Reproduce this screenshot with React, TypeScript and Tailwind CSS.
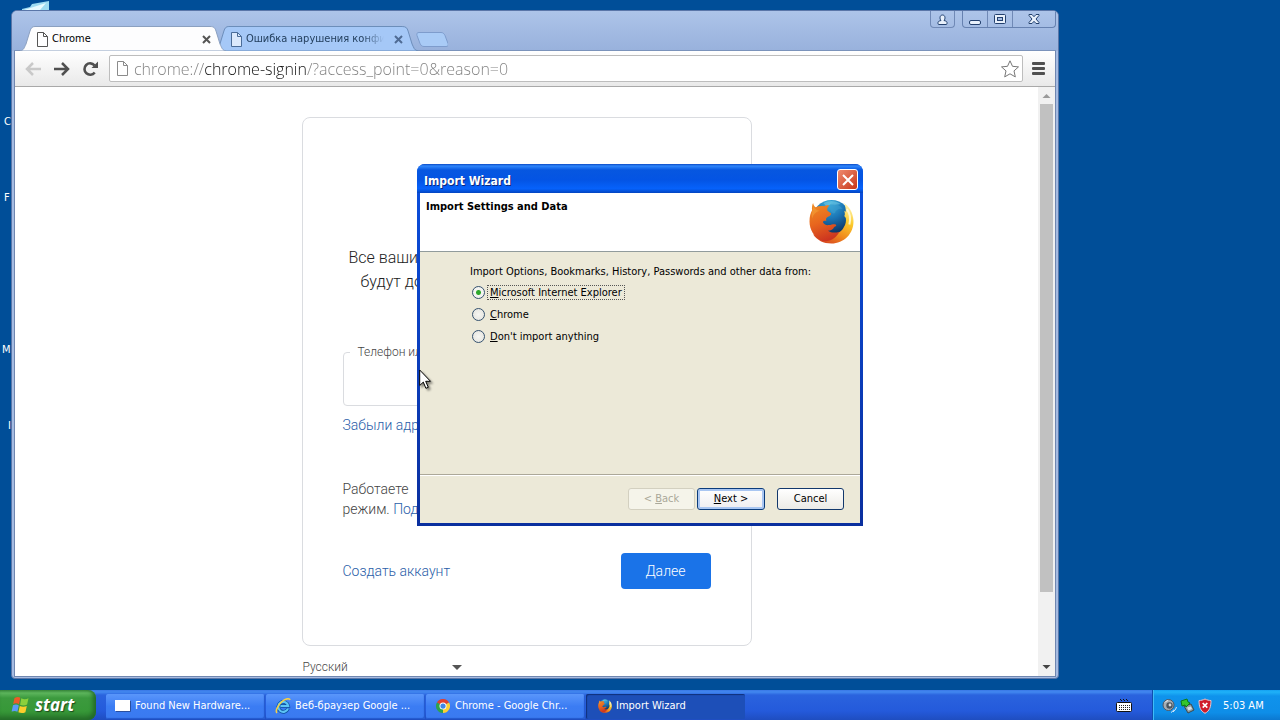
import type { ReactNode } from "react";

function PageIcon({ className = "" }: { className?: string }) {
  return (
    <svg width="12" height="15" viewBox="0 0 12 15" className={`shrink-0 ${className}`} fill="none" stroke="currentColor" aria-hidden="true">
      <path d="M1.500 .5h6l4 4v10h-10z" fill="#fff" fillOpacity=".6" />
      <path d="M7.500 .5v4h4" />
    </svg>
  );
}

function CloseMark({ className = "" }: { className?: string }) {
  return (
    <svg width="9" height="9" viewBox="0 0 9 9" className={className} stroke="currentColor" strokeWidth="2" aria-hidden="true">
      <path d="M1 1l7 7M8 1L1 8" />
    </svg>
  );
}

function FirefoxLogo({ size }: { size: number }) {
  return (
    <svg width={size} height={size} viewBox="0 0 44 44" className="shrink-0" aria-hidden="true">
      <defs>
        <radialGradient id={`globe${size}`} cx="45%" cy="10%" r="85%">
          <stop offset="0" stopColor="#3ab0dc" />
          <stop offset=".45" stopColor="#1a74b4" />
          <stop offset="1" stopColor="#0b2450" />
        </radialGradient>
        <linearGradient id={`fox${size}`} x1=".2" y1="0" x2=".5" y2="1">
          <stop offset="0" stopColor="#ee8a24" />
          <stop offset=".5" stopColor="#e8661e" />
          <stop offset="1" stopColor="#cc3420" />
        </linearGradient>
        <linearGradient id={`tail${size}`} x1=".8" y1="0" x2=".3" y2="1">
          <stop offset="0" stopColor="#fff5b8" />
          <stop offset=".35" stopColor="#fbcb2c" />
          <stop offset=".7" stopColor="#f08a1e" />
          <stop offset="1" stopColor="#d8461f" />
        </linearGradient>
      </defs>
      <circle cx="22" cy="20" r="19" fill={`url(#globe${size})`} />
      <path d="M14 4c5-3 12-3 17 1-2 0-4 1-6 1-3-1-6 0-8 1z" fill="#7fcfe8" opacity=".5" />
      <path d="M21 5c5-1 9 1 12 5-3-1-5 0-7 2 0 2-2 3-4 1-1-3-4-5-1-8z" fill="#3f9fd0" opacity=".5" />
      <path
        d="M34 4c5 3 9 9 9.500 17C44 34 34 43.500 22 43.500c-8 0-14-3-18-9 7 2 13 2 19 0 6-1 9-3 11-7 2-3 2.500-6 2-9l-1.500-2c1-1 .5-3 0-5l1.500 1c0-3-.5-6-2-8.500z"
        fill={`url(#tail${size})`}
      />
      <path
        d="M4 4c.5 2 1 3.500 2.500 4C9 6.800 12 6.500 15 7c1.500-1 3-1 5-.5-2 1-2.500 3-2 5l3.500 2.500c.5 2-2 3-4 4-1 1-1 2-.5 3.500-1.500-.5-3 0-3.500 1 1 2 3 3.500 6 3 3-.5 5-1.500 6.500-.5 1.500.8 0 2-1.500 2.500-1 2-3 3.500-6 3.500 3 2 7 2.500 11 1C28 37 20 43 13 41 5 37.500.5 30 .5 22c0-5 1-8 2.500-11-.3-2.500 0-5 1-7z"
        fill={`url(#fox${size})`}
      />
      <path d="M4.500 7c1 2.500 3 4 6 4.500C7 12.500 4 15 3 19c-.8-4 0-8 1.500-12z" fill="#f6a63c" opacity=".5" />
      <path d="M37 10c3 4 4 9 2.500 15" fill="none" stroke="#fffbe0" strokeWidth="2" opacity=".85" />
    </svg>
  );
}

function ExplorerLogo() {
  return (
    <svg width="16" height="16" viewBox="0 0 16 16" className="shrink-0" fill="none" aria-hidden="true">
      <path d="M13 10.500A5 5 0 1 1 13.200 8H5.500" stroke="#0b4f9c" strokeWidth="3.600" />
      <path d="M13 10.500A5 5 0 1 1 13.200 8H5.500" stroke="#5cc4f6" strokeWidth="2.200" />
      <path d="M2 15c-2-2 1-8 5-11.500C10.500.5 14.500 0 15 2" stroke="#f4cf4a" strokeWidth="1.600" />
    </svg>
  );
}

function ChromeLogo() {
  return (
    <svg width="14" height="14" viewBox="0 0 24 24" className="shrink-0" aria-hidden="true">
      <path d="M12 12L1.600 6A12 12 0 0 1 22.400 6z" fill="#e2402e" />
      <path d="M12 12L22.400 6A12 12 0 0 1 12 24z" fill="#fbcf35" />
      <path d="M12 12l0 12A12 12 0 0 1 1.600 6z" fill="#2fa24c" />
      <circle cx="12" cy="12" r="6" fill="#fff" />
      <circle cx="12" cy="12" r="4.500" fill="#3f86e8" />
    </svg>
  );
}

function WindowsFlag() {
  return (
    <svg width="19" height="18" viewBox="0 0 19 18" className="shrink-0" aria-hidden="true">
      <path d="M3.500 2C6 .6 7.800.8 9.300 1.800L8 8.200C6.300 7.200 4.500 7 2.200 8z" fill="#ee5a28" />
      <path d="M10.300 2.300c2.300 1.200 4.700 1.200 7.200 0l-1.400 6.300c-2.400 1.200-4.800 1.200-7 .1z" fill="#8bd03c" />
      <path d="M2 9.200c2.300-1 4.200-.8 5.800.2L6.400 15.800C4.700 14.800 3 14.600.6 15.600z" fill="#5b9bf5" />
      <path d="M8.800 9.900c2.200 1.100 4.600 1.100 7 0l-1.400 6.300c-2.400 1.200-4.700 1.200-7 .1z" fill="#fbcd2c" />
    </svg>
  );
}

function Tab({ active, width, title, textClass }: { active: boolean; width: string; title: string; textClass: string }) {
  return (
    <div className={`relative flex h-[25px] items-center ${width} ${active ? "z-10 text-black" : "-ml-3 text-[#24405f]"}`}>
      <svg viewBox="0 0 206 25" preserveAspectRatio="none" className="absolute inset-0 h-full w-full" aria-hidden="true">
        <path
          d="M0 25C4 24 4 22 6 18L10 5C11 2 12 .5 15 .5H190C194 .5 195 2 196 5L200 18C202 22 202 24 206 25z"
          fill={active ? "#fdfdfe" : "#a5c8f7"}
          stroke={active ? "#8ba0c0" : "#6c8db9"}
        />
      </svg>
      <button type="button" className="relative flex min-w-0 flex-1 items-center gap-1 pt-px pl-4 text-left">
        <PageIcon className={active ? "text-[#555]" : "text-[#4a6c98]"} />
        <span className={`overflow-hidden whitespace-nowrap ${textClass}`}>{title}</span>
      </button>
      <button type="button" aria-label="Close tab" className="relative mr-[15px] shrink-0 pt-px">
        <CloseMark className={active ? "text-[#555]" : "text-[#4f6b94]"} />
      </button>
    </div>
  );
}

function ChromeTitleBar() {
  return (
    <header className="flex h-10 items-start justify-between bg-linear-to-b from-[#adc4e9] to-[#98b1dc] pl-2">
      <div className="flex items-end self-end">
        <Tab active width="w-[206px]" title="Chrome" textClass="" />
        <Tab
          active={false}
          width="w-[204px]"
          title="Ошибка нарушения конфигурации"
          textClass="w-[138px] [mask-image:linear-gradient(to_right,black_85%,transparent)]"
        />
        <button type="button" aria-label="New tab" className="-ml-[2px] mb-1">
          <svg width="32" height="15" viewBox="0 0 32 15" aria-hidden="true">
            <path d="M3 .5h22c2 0 3 1 4 3l3 8c.6 2 0 3-2 3H8c-2 0-3-1-4-3L1 3.500C.5 1.500 1 .5 3 .5z" fill="#a9cbf6" stroke="#7e9ccc" />
          </svg>
        </button>
      </div>
      <div className="flex items-start gap-[7px] pr-[2px] text-[#23406e]">
        <button type="button" aria-label="Profile" className="flex h-[17px] w-[25px] items-center justify-center rounded-b border border-t-0 border-[#7089b6]">
          <svg width="11" height="11" viewBox="0 0 11 11" fill="#e8f0fb" stroke="currentColor" aria-hidden="true">
            <path d="M1 9.500V8.500c0-1 1-1.500 3-2C2.500 5 2.500 1 5.500 1s3 4 1.500 5.500c2 .5 3 1 3 2v1q0 1-1 1H2q-1 0-1-1z" />
          </svg>
        </button>
        <div className="flex h-[17px] divide-x divide-[#7089b6] overflow-hidden rounded-b border border-t-0 border-[#6681b0]">
          <button type="button" aria-label="Minimize" className="flex w-[25px] items-end justify-center pb-[2px]">
            <svg width="12" height="5" viewBox="0 0 12 5" fill="#e8f0fb" stroke="currentColor" aria-hidden="true">
              <rect x=".5" y=".5" width="11" height="4" rx="1.500" />
            </svg>
          </button>
          <button type="button" aria-label="Maximize" className="flex w-[25px] items-center justify-center">
            <svg width="12" height="10" viewBox="0 0 12 10" fill="#e8f0fb" stroke="currentColor" aria-hidden="true">
              <rect x=".5" y=".5" width="11" height="9" rx="1" />
              <rect x="3.500" y="3.500" width="5" height="3" fill="#a5bde4" />
            </svg>
          </button>
          <button type="button" aria-label="Close" className="flex w-[42px] items-center justify-center">
            <svg width="12" height="10" viewBox="0 0 12 10" fill="#e8f0fb" stroke="currentColor" aria-hidden="true">
              <path d="M1 .5h3L6 2.700 8 .5h3v1L8 5l3 3.500v1H8L6 7.300 4 9.500H1v-1L4 5 1 1.500z" />
            </svg>
          </button>
        </div>
      </div>
    </header>
  );
}

function ChromeToolbar() {
  return (
    <div className="flex h-9 items-center border-b border-[#a9a9a9] bg-linear-to-b from-white to-[#e9e9e9] pr-[9px] pl-[9px]">
      <button type="button" aria-label="Back" className="text-[#c9c9c9]">
        <svg width="18" height="16" viewBox="0 0 18 16" fill="none" stroke="currentColor" strokeWidth="2.500" aria-hidden="true">
          <path d="M17 8H3M9 2L3 8l6 6" />
        </svg>
      </button>
      <button type="button" aria-label="Forward" className="ml-[11px] text-[#505050]">
        <svg width="18" height="16" viewBox="0 0 18 16" fill="none" stroke="currentColor" strokeWidth="2.500" aria-hidden="true">
          <path d="M1 8h14M9 2l6 6-6 6" />
        </svg>
      </button>
      <button type="button" aria-label="Reload" className="ml-[11px] text-[#505050]">
        <svg width="17" height="16" viewBox="0 0 17 16" fill="none" stroke="currentColor" strokeWidth="2.600" aria-hidden="true">
          <path d="M12.700 11.500A5.700 5.700 0 1 1 12.500 4.300" />
          <path d="M16 .5V7H9.500z" fill="currentColor" stroke="none" />
        </svg>
      </button>
      <div className="ml-[10px] flex h-[27px] min-w-0 flex-1 items-center rounded-xs border border-[#bdbdbd] bg-white pr-[3px] pl-[6px]">
        <PageIcon className="mr-[6px] text-[#8b8b8b]" />
        <input
          aria-label="Address"
          defaultValue="chrome://chrome-signin/?access_point=0&reason=0"
          className="min-w-0 flex-1 bg-[linear-gradient(to_right,#7d7d7d_71px,#111_71px,#111_172px,#7d7d7d_172px)] bg-clip-text font-['Open_Sans',sans-serif] text-base font-light text-transparent outline-none"
        />
        <button type="button" aria-label="Bookmark this page" className="text-[#777]">
          <svg width="18" height="18" viewBox="0 0 18 18" fill="#fff" stroke="currentColor" strokeLinejoin="round" aria-hidden="true">
            <path d="M9 .8l2.500 5.500 6 .6-4.500 4 1.300 6L9 13.800l-5.300 3.100 1.300-6-4.500-4 6-.6z" />
          </svg>
        </button>
      </div>
      <button type="button" aria-label="Menu" className="ml-2 text-[#505050]">
        <svg width="15" height="14" viewBox="0 0 15 14" fill="currentColor" aria-hidden="true">
          <rect x="1" y="0" width="13" height="3" rx="1" />
          <rect x="1" y="5" width="13" height="3" rx="1" />
          <rect x="1" y="10" width="13" height="3" rx="1" />
        </svg>
      </button>
    </div>
  );
}

function SignInPage() {
  return (
    <main className="flex min-w-0 flex-1 flex-col items-center overflow-hidden bg-white pt-[30px] font-[Roboto,sans-serif] text-sm leading-5 font-light text-[#333]">
      <div className="w-[450px] shrink-0">
        <section className="rounded-lg border border-[#dadce0] px-10 pt-32 pb-14">
          <p className="pl-[6px] text-base leading-6 whitespace-nowrap text-[#222]">
            Все ваши закладки
            <br />
            <span className="pl-3">будут доступны</span>
          </p>
          <fieldset className="mt-[50px] h-[62px] rounded border border-[#dadce0] pl-[6px]">
            <legend className="px-2 text-xs leading-4 text-[#444]">
              <label htmlFor="email">Телефон или адрес</label>
            </legend>
            <input id="email" type="text" className="w-full outline-none" />
          </fieldset>
          <a href="#forgot" className="mt-[9px] block text-[#2a5da8]">
            Забыли адрес
          </a>
          <p className="mt-11 text-[#444]">
            Работаете
            <br />
            режим.{" "}
            <a href="#more" className="text-[#2a5da8]">
              Подробнее
            </a>
          </p>
          <div className="mt-[34px] flex items-center justify-between">
            <a href="#create" className="text-[#2a5da8]">
              Создать аккаунт
            </a>
            <button type="button" className="h-9 w-[90px] rounded bg-[#1a73e8] text-white">
              Далее
            </button>
          </div>
        </section>
        <div className="relative mt-[13px] flex w-[160px] items-center">
          <select aria-label="Язык" className="w-full appearance-none bg-transparent pl-px text-xs text-[#444] outline-none">
            <option>Русский</option>
          </select>
          <svg width="10" height="5" viewBox="0 0 10 5" className="pointer-events-none absolute right-0" fill="#555" aria-hidden="true">
            <path d="M0 0h10L5 5z" />
          </svg>
        </div>
      </div>
    </main>
  );
}

function Scrollbar() {
  return (
    <div className="flex w-[17px] flex-col items-center bg-[#f1f1f1]" aria-hidden="true">
      <svg width="17" height="17" viewBox="0 0 17 17" className="shrink-0" fill="#9a9a9a">
        <path d="M4.500 11h8l-4-4z" />
      </svg>
      <div className="flex-1 self-stretch px-[2px]">
        <div className="h-[88%] bg-[#c1c1c1]" />
      </div>
      <svg width="17" height="17" viewBox="0 0 17 17" className="shrink-0" fill="#444">
        <path d="M4.500 6h8l-4 4z" />
      </svg>
    </div>
  );
}

function ChromeWindow() {
  return (
    <div className="absolute top-[10px] right-[221px] bottom-[11px] left-[11px] flex flex-col overflow-hidden rounded-t-md rounded-b-sm border border-[#5a76a8] bg-[#a6bce2]">
      <ChromeTitleBar />
      <div className="mx-[2px] mb-px flex min-h-0 flex-1 flex-col border border-t-0 border-[#6f86b0] shadow-[0_-1px_0_#7b93bb]">
        <ChromeToolbar />
        <div className="flex min-h-0 flex-1">
          <SignInPage />
          <Scrollbar />
        </div>
      </div>
    </div>
  );
}

function RadioOption({ accessKey, rest, checked = false }: { accessKey: string; rest: string; checked?: boolean }) {
  return (
    <label className="flex h-[22px] items-center gap-[2px]">
      <input
        type="radio"
        name="source"
        defaultChecked={checked}
        className="size-[13px] appearance-none rounded-full border border-[#34516f] bg-[radial-gradient(circle,#f6f6f2,#e2e2dc)] checked:bg-[radial-gradient(circle,#2fa82c_0_2px,#f4f4f0_3px)]"
      />
      <span className={`border border-dotted px-[2px] leading-[13px] ${checked ? "border-[#555]" : "border-transparent"}`}>
        <u>{accessKey}</u>
        {rest}
      </span>
    </label>
  );
}

function ImportWizard() {
  return (
    <div role="dialog" aria-labelledby="wizard-title" className="relative flex w-[446px] flex-col overflow-hidden rounded-t-lg bg-linear-to-b from-[#0a50e0] to-[#0a2f9e] text-black">
      <div className="flex h-[29px] items-center justify-between bg-[linear-gradient(#0a49c4,#2f86fb_2px,#0757e0_6px,#0454e4_55%,#0662fb_85%,#0344c0)] pr-[5px] pl-[7px]">
        <h1 id="wizard-title" className="pt-1 text-xs font-bold text-white [text-shadow:1px_1px_0_#0a2a80]">
          Import Wizard
        </h1>
        <button type="button" aria-label="Close" className="mt-[2px] flex size-[21px] items-center justify-center rounded-[3px] border border-white bg-linear-to-br from-[#ee8a6e] to-[#c63212] text-white">
          <svg width="12" height="12" viewBox="0 0 12 12" stroke="currentColor" strokeWidth="2" aria-hidden="true">
            <path d="M1 1l10 10M11 1L1 11" />
          </svg>
        </button>
      </div>
      <div className="mx-[3px] mb-[3px] bg-[#ece9d8]">
        <div className="flex h-[59px] items-start justify-between border-b border-[#919b9c] bg-white pt-[6px] pr-[6px] pl-[6px]">
          <h2 className="font-bold">Import Settings and Data</h2>
          <FirefoxLogo size={45} />
        </div>
        <div role="radiogroup" aria-labelledby="source-label" className="h-[222px] pt-3 pl-[50px]">
          <p id="source-label" className="mb-px">
            Import Options, Bookmarks, History, Passwords and other data from:
          </p>
          <div className="pl-[2px]">
            <RadioOption accessKey="M" rest="icrosoft Internet Explorer" checked />
            <RadioOption accessKey="C" rest="hrome" />
            <RadioOption accessKey="D" rest="on't import anything" />
          </div>
        </div>
        <div className="flex h-[49px] items-start justify-end border-t border-[#aca899] pt-[13px] pr-4 shadow-[inset_0_1px_0_#fff]">
          <button type="button" disabled className="h-[22px] w-[67px] rounded-[3px] border border-[#d3d0c0] bg-[#f5f4ea] text-[#aaa899]">
            &lt; <u>B</u>ack
          </button>
          <button type="button" className="ml-[2px] h-[22px] w-[68px] rounded-[3px] border border-[#0b3c7c] bg-linear-to-b from-white to-[#eeedf0] shadow-[inset_0_0_0_2px_#a9c6f2]">
            <u>N</u>ext &gt;
          </button>
          <button type="button" className="ml-3 h-[22px] w-[67px] rounded-[3px] border border-[#12386c] bg-linear-to-b from-white to-[#ecebe6]">
            Cancel
          </button>
        </div>
      </div>
    </div>
  );
}

function DesktopLabel({ className, children }: { className: string; children: ReactNode }) {
  return <span className={`absolute text-white ${className}`}>{children}</span>;
}

function TaskButton({ icon, title, active = false }: { icon: ReactNode; title: string; active?: boolean }) {
  return (
    <button
      type="button"
      className={`flex h-[25px] w-[159px] min-w-0 items-center gap-1 rounded-xs pl-[9px] text-left whitespace-nowrap text-white ${
        active
          ? "bg-[#1d4fb8] shadow-[inset_1px_1px_1px_#10307c]"
          : "bg-linear-to-b from-[#5a96fb] via-[#3b7cf3] to-[#3a7af0] shadow-[inset_-1px_-1px_1px_#2358cc]"
      }`}
    >
      {icon}
      <span className="truncate">{title}</span>
    </button>
  );
}

function Taskbar() {
  return (
    <footer className="flex h-[30px] shrink-0 items-stretch bg-[linear-gradient(#3a78e6,#4288f0_2px,#2a63de_5px,#245adb_70%,#1f4dc0)]">
      <button
        type="button"
        className="flex w-24 items-center gap-[5px] rounded-r-lg bg-[linear-gradient(#3a8a3c,#5cb55c_3px,#3c9a3e_8px,#379838_70%,#2a7a2c)] pl-[11px] font-['Open_Sans',sans-serif] text-[17px] font-bold text-white italic shadow-[inset_-3px_-2px_4px_#236a28] [text-shadow:1px_1px_1px_#1b4a1c]"
      >
        <WindowsFlag />
        <span>start</span>
      </button>
      <nav aria-label="Running programs" className="flex min-w-0 flex-1 items-center gap-px pt-[2px] pl-[10px]">
        <TaskButton
          title="Found New Hardware..."
          icon={
            <svg width="16" height="12" viewBox="0 0 16 12" className="shrink-0" aria-hidden="true">
              <rect width="15" height="11" fill="#fff" />
              <path d="M15.500 1v10.500H1" stroke="#2a4f9e" fill="none" />
            </svg>
          }
        />
        <TaskButton title="Веб-браузер Google ..." icon={<ExplorerLogo />} />
        <TaskButton
          title="Chrome - Google Chr..."
          icon={
            <span className="flex w-4 justify-center">
              <ChromeLogo />
            </span>
          }
        />
        <TaskButton
          active
          title="Import Wizard"
          icon={
            <span className="flex w-[17px] justify-end">
              <FirefoxLogo size={14} />
            </span>
          }
        />
      </nav>
      <button type="button" aria-label="Keyboard layout" className="mr-5">
        <svg width="16" height="14" viewBox="0 0 16 14" aria-hidden="true">
          <path d="M4 1.500h1M7 1.500h1M10 1.500h1M5 2.500h1M8 2.500h1M11 2.500h1" stroke="#111" />
          <rect x=".5" y="4.500" width="15" height="9" rx="1" fill="#fff" stroke="#111" />
          <path d="M3 7.500h11M3 9.500h11M3 11.500h11" stroke="#222" strokeDasharray="1 1" />
        </svg>
      </button>
      <div className="flex w-[128px] items-center border-l border-[#0f4fae] bg-[linear-gradient(#15a0f2,#1fb1f8_2px,#0f93ec_6px,#0e8ee8_75%,#0c78d0)] pt-px pl-[9px] text-white shadow-[inset_1px_0_0_#3fbdf8]">
        <svg width="16" height="16" viewBox="0 0 16 16" aria-hidden="true">
          <circle cx="6.500" cy="7" r="5.500" fill="#a4acb4" stroke="#4c5866" />
          <circle cx="7.500" cy="7.500" r="3.200" fill="#4a5560" />
          <circle cx="8" cy="7" r="1.400" fill="#d5dade" />
          <path d="M3 4.500q1-1.500 3-2" stroke="#eef0f2" fill="none" />
          <path d="M11 14q3-2 3.500-5M9 14.500q2-1 3-3" stroke="#d6e8f8" fill="none" />
        </svg>
        <svg width="16" height="16" viewBox="0 0 16 16" className="ml-[2px]" aria-hidden="true">
          <path d="M4 8l7-2 3 6-6 3z" fill="#8e9a9e" stroke="#3a4a50" />
          <path d="M7 9.500l4-1 1 2.500-3.500 1.500z" fill="#d9e2e4" />
          <path d="M1 3l6-2 1 3 2 1-4 4-1-2-3 1z" fill="#35c52c" stroke="#0d7a17" />
        </svg>
        <svg width="14" height="16" viewBox="0 0 14 16" className="ml-[2px]" aria-hidden="true">
          <path d="M7 1c2 1 4 1.500 6 1.500C13 9 11.500 13 7 15.300 2.500 13 1 9 1 2.500 3 2.500 5 2 7 1z" fill="#d01c2a" stroke="#e8c6cc" />
          <path d="M4.700 5l4.600 4.600M9.300 5L4.700 9.600" stroke="#fff" strokeWidth="1.700" />
        </svg>
        <time className="ml-[11px] whitespace-nowrap">5:03 AM</time>
      </div>
    </footer>
  );
}

export default function App() {
  return (
    <div className="flex h-screen flex-col overflow-hidden bg-[#004e98] font-['DejaVu_Sans_Condensed','DejaVu_Sans',sans-serif] text-[11px] leading-4">
      <div className="relative grid min-h-0 flex-1 place-items-center">
        <svg width="30" height="14" viewBox="0 0 30 14" className="absolute top-0 left-5" aria-hidden="true">
          <path d="M2 9l8-2 2-3 17-3v12H2z" fill="#9fdcf2" />
          <path d="M4 10l22-7-6 7z" fill="#e8fbff" />
        </svg>
        <DesktopLabel className="top-[114px] left-1">C</DesktopLabel>
        <DesktopLabel className="top-[190px] left-1">F</DesktopLabel>
        <DesktopLabel className="top-[342px] left-[2px]">M</DesktopLabel>
        <DesktopLabel className="top-[418px] left-2">I</DesktopLabel>
        <ChromeWindow />
        <ImportWizard />
        <svg width="14" height="22" viewBox="0 0 14 22" className="absolute top-[369px] left-[419px] drop-shadow-[2px_2px_1px_rgba(0,0,0,0.45)]" aria-hidden="true">
          <path d="M.7 1v15.500l3.600-3.400 2.600 6.200 2.400-1-2.600-6h4.800z" fill="#fff" stroke="#000" />
        </svg>
      </div>
      <Taskbar />
    </div>
  );
}
